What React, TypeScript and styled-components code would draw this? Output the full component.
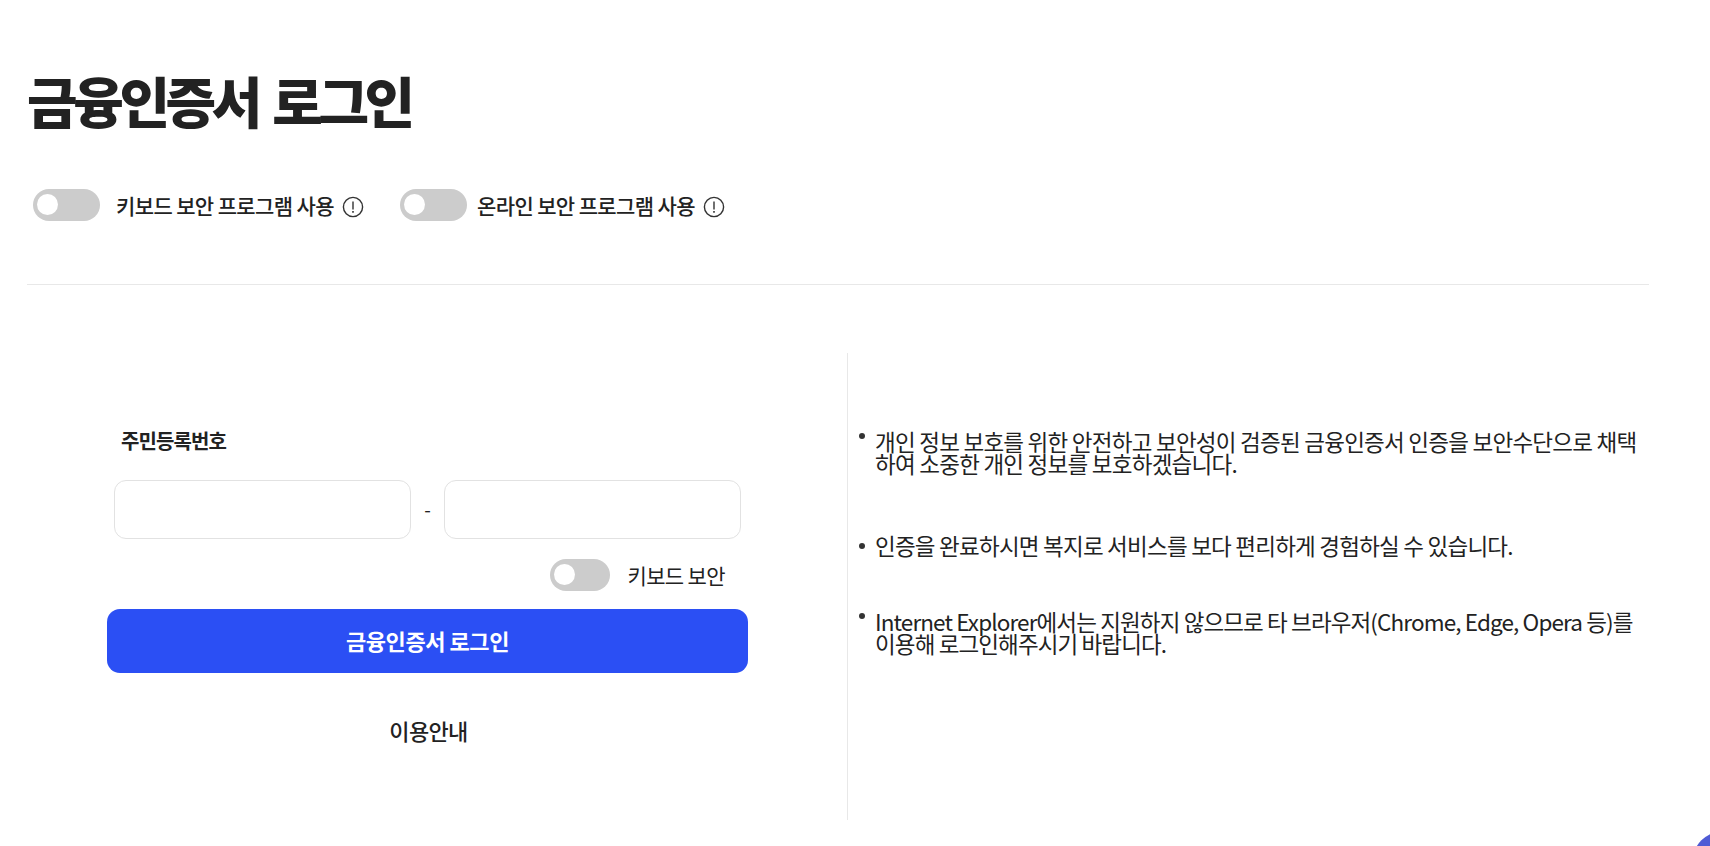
import React from "react";
import styled, { createGlobalStyle } from "styled-components";

const GlobalStyle = createGlobalStyle`
  html, body {
    margin: 0;
    padding: 0;
    height: 100%;
    overflow: hidden;
    background: #fff;
    color: #222;
    font-family: "Noto Sans CJK KR", "Noto Sans", sans-serif;
  }
  * {
    box-sizing: border-box;
  }
`;

const Page = styled.main`
  position: relative;
  width: 1710px;
  height: 846px;
  padding: 0 61px 0 27px;
  overflow: hidden;
`;

const Title = styled.h1`
  margin: 0;
  padding-top: 62px;
  height: 189px;
  font-size: 55px;
  line-height: 74px;
  font-weight: 900;
  letter-spacing: -0.08em;
  word-spacing: 6px;
  color: #222;
`;

const OptionBar = styled.div`
  display: flex;
  align-items: center;
  height: 96px;
  padding: 0 0 64px 6px;
  border-bottom: 1px solid #e8e8e8;
`;

const Option = styled.div<{ $width: number }>`
  display: flex;
  align-items: center;
  width: ${({ $width }) => $width}px;
`;

const Toggle = styled.span<{ $width: number }>`
  position: relative;
  flex: none;
  display: block;
  width: ${({ $width }) => $width}px;
  height: 32px;
  border-radius: 16px;
  background: #ccc;

  &::before {
    content: "";
    position: absolute;
    top: 5px;
    left: 4px;
    width: 21px;
    height: 21px;
    border-radius: 50%;
    background: #fff;
  }
`;

const OptionLabel = styled.span<{ $gap: number }>`
  margin-left: ${({ $gap }) => $gap}px;
  font-size: 21px;
  line-height: 32px;
  font-weight: 500;
  letter-spacing: -0.03em;
  white-space: nowrap;
`;

const InfoIcon = styled.svg`
  flex: none;
  margin: 4px 0 0 7px;
  width: 24px;
  height: 24px;
`;

const Content = styled.div`
  display: grid;
  grid-template-columns: 821px 1fr;
  margin-top: 68px;
  height: 467px;
`;

const FormColumn = styled.section`
  display: flex;
  flex-direction: column;
  padding: 74px 0 0 80px;
  border-right: 1px solid #e8e8e8;
`;

const FieldLabel = styled.label`
  margin-left: 14px;
  font-size: 20px;
  line-height: 28px;
  font-weight: 700;
  letter-spacing: -0.045em;
`;

const InputRow = styled.div`
  display: flex;
  align-items: center;
  margin: 25px 0 0 7px;
  width: 627px;
`;

const NumberInput = styled.input`
  width: 297px;
  height: 59px;
  padding: 0 16px;
  border: 1px solid #e2e2e2;
  border-radius: 12px;
  background: #fff;
  outline: none;
`;

const Dash = styled.span`
  flex: 1;
  padding-bottom: 2px;
  text-align: center;
  font-size: 19px;
  line-height: 24px;
  color: #222;
`;

const KeyboardRow = styled.div`
  display: flex;
  align-items: center;
  justify-content: flex-end;
  margin-top: 20px;
  padding-right: 23px;
  width: 641px;
`;

const KeyboardLabel = styled.span`
  margin-left: 17px;
  font-size: 21px;
  line-height: 32px;
  font-weight: 400;
  letter-spacing: -0.03em;
`;

const LoginButton = styled.button`
  display: block;
  margin-top: 18px;
  padding-bottom: 3px;
  width: 641px;
  height: 64px;
  border: 0;
  border-radius: 13px;
  background: #2b4ff4;
  color: #fff;
  font-family: inherit;
  font-size: 22px;
  font-weight: 700;
  letter-spacing: -0.02em;
`;

const GuideLink = styled.a`
  margin-top: 41px;
  padding-left: 2px;
  width: 641px;
  text-align: center;
  font-size: 22px;
  line-height: 32px;
  font-weight: 500;
  letter-spacing: -0.03em;
  color: #222;
`;

const NoticeColumn = styled.ul`
  margin: 0;
  padding: 77px 0 0 11px;
  list-style: none;
`;

const Notice = styled.li<{ $top: number; $dot: number; $tracking: number }>`
  position: relative;
  margin-top: ${({ $top }) => $top}px;
  padding-left: 16px;
  font-size: 22.5px;
  line-height: 22px;
  letter-spacing: ${({ $tracking }) => $tracking}em;
  white-space: nowrap;
  color: #222;

  &::before {
    content: "";
    position: absolute;
    top: ${({ $dot }) => $dot}px;
    left: 0;
    width: 6px;
    height: 6px;
    border-radius: 50%;
    background: #333;
  }
`;

const CornerButton = styled.div`
  position: absolute;
  right: -46px;
  bottom: -49px;
  width: 64px;
  height: 64px;
  border-radius: 50%;
  background: #4f5bd5;
`;

const Info = () => (
  <InfoIcon viewBox="0 0 24 24" fill="none">
    <circle cx="12" cy="12" r="9.6" stroke="#333" strokeWidth="1.4" />
    <path d="M12 6.5v8" stroke="#333" strokeWidth="1.4" />
    <path d="M12 16v1.7" stroke="#333" strokeWidth="1.6" />
  </InfoIcon>
);

export default function App() {
  return (
    <>
      <GlobalStyle />
      <Page>
        <Title>금융인증서 로그인</Title>
        <OptionBar>
          <Option $width={367}>
            <Toggle $width={67} />
            <OptionLabel $gap={16}>키보드 보안 프로그램 사용</OptionLabel>
            <Info />
          </Option>
          <Option $width={340}>
            <Toggle $width={67} />
            <OptionLabel $gap={10}>온라인 보안 프로그램 사용</OptionLabel>
            <Info />
          </Option>
        </OptionBar>
        <Content>
          <FormColumn>
            <FieldLabel>주민등록번호</FieldLabel>
            <InputRow>
              <NumberInput />
              <Dash>-</Dash>
              <NumberInput />
            </InputRow>
            <KeyboardRow>
              <Toggle $width={60} />
              <KeyboardLabel>키보드 보안</KeyboardLabel>
            </KeyboardRow>
            <LoginButton>금융인증서 로그인</LoginButton>
            <GuideLink>이용안내</GuideLink>
          </FormColumn>
          <NoticeColumn>
            <Notice $top={0} $dot={3} $tracking={-0.033}>
              개인 정보 보호를 위한 안전하고 보안성이 검증된 금융인증서 인증을 보안수단으로 채택
              <br />
              하여 소중한 개인 정보를 보호하겠습니다.
            </Notice>
            <Notice $top={60} $dot={9} $tracking={-0.034}>
              인증을 완료하시면 복지로 서비스를 보다 편리하게 경험하실 수 있습니다.
            </Notice>
            <Notice $top={54} $dot={3} $tracking={-0.039}>
              Internet Explorer에서는 지원하지 않으므로 타 브라우저(Chrome, Edge, Opera 등)를
              <br />
              이용해 로그인해주시기 바랍니다.
            </Notice>
          </NoticeColumn>
        </Content>
        <CornerButton />
      </Page>
    </>
  );
}
